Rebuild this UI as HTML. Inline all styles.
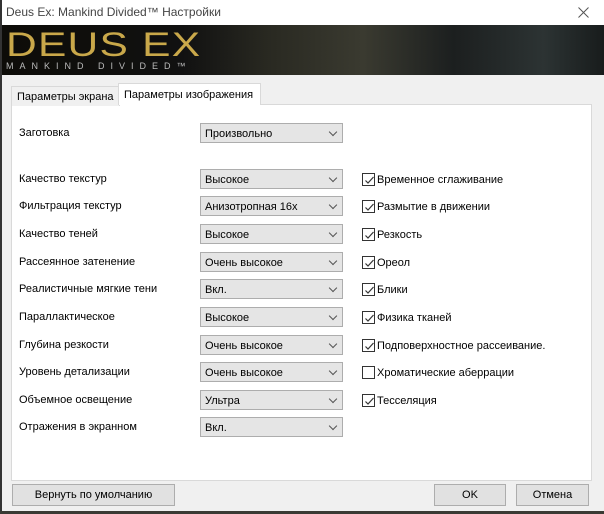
<!DOCTYPE html><html><head><style>
*{box-sizing:border-box;margin:0;padding:0}
body{width:604px;height:514px;background:#f0f0f0;font-family:"Liberation Sans",sans-serif;font-size:11px;color:#000;position:relative;overflow:hidden}
.a{position:absolute}
.title{left:0;top:0;width:604px;height:25px;background:#fff;font-size:12px;line-height:25px;padding-left:6px;color:#444}
.ban{left:2px;top:25px;width:602px;height:50px;background:linear-gradient(90deg,#0d0c08 0,#111 30%,#2a2a22 45%,#3a3a30 60%,#1c1f1f 75%,#2c3333 90%,#181c1c 100%)}
.logo{left:6px;top:26px;font-family:"Liberation Sans",sans-serif;font-size:34px;color:#c9a84a;letter-spacing:1px;transform:scaleX(1.25);transform-origin:left}
.sub{left:6px;top:61px;font-size:9px;color:#bbb;letter-spacing:6px}
.panel{left:11px;top:104px;width:581px;height:377px;background:#fff;border:1px solid #d9d9d9}
.tab{height:20px;border:1px solid #d9d9d9;border-bottom:none;line-height:21px;padding:0 5px;background:#f0f0f0}
.lbl{left:19px;margin-top:1px}
.cb{left:200px;width:143px;height:20px;background:#e5e5e5;border:1px solid #adadad;line-height:20px;padding-left:4px}
.cb:after{content:"";position:absolute;right:6px;top:5px;width:5px;height:5px;border-right:1px solid #555;border-bottom:1px solid #555;transform:rotate(45deg)}
.ck{left:362px;width:13px;height:13px;border:1px solid #333;background:#fff}
.ck svg{position:absolute;left:1px;top:1px}
.cl{left:377px;margin-top:1px}
.btn{height:22px;background:#e1e1e1;border:1px solid #adadad;text-align:center;line-height:21px}
</style></head><body>
<div class="a title">Deus Ex: Mankind Divided™ Настройки</div>
<svg class="a" style="left:578px;top:7px" width="11" height="11"><path d="M0.5 0.5L10.5 10.5M10.5 0.5L0.5 10.5" stroke="#555" stroke-width="1"/></svg>
<div class="a" style="left:0;top:0;width:2px;height:514px;background:#333"></div>
<div class="a ban"></div>
<div class="a logo">DEUS EX</div>
<div class="a sub">MANKIND DIVIDED™</div>
<div class="a panel"></div>
<div class="a tab" style="left:11px;top:86px">Параметры экрана</div>
<div class="a tab" style="left:118px;top:83px;height:22px;background:#fff;width:143px;line-height:22px">Параметры изображения</div>
<div class="a lbl" style="top:126px">Заготовка</div>
<div class="a cb" style="top:123px">Произвольно</div>
<div class="a lbl" style="top:172px">Качество текстур</div><div class="a cb" style="top:169px">Высокое</div>
<div class="a lbl" style="top:199px">Фильтрация текстур</div><div class="a cb" style="top:196px">Анизотропная 16x</div>
<div class="a lbl" style="top:227px">Качество теней</div><div class="a cb" style="top:224px">Высокое</div>
<div class="a lbl" style="top:255px">Рассеянное затенение</div><div class="a cb" style="top:252px">Очень высокое</div>
<div class="a lbl" style="top:282px">Реалистичные мягкие тени</div><div class="a cb" style="top:279px">Вкл.</div>
<div class="a lbl" style="top:310px">Параллактическое</div><div class="a cb" style="top:307px">Высокое</div>
<div class="a lbl" style="top:338px">Глубина резкости</div><div class="a cb" style="top:335px">Очень высокое</div>
<div class="a lbl" style="top:365px">Уровень детализации</div><div class="a cb" style="top:362px">Очень высокое</div>
<div class="a lbl" style="top:393px">Объемное освещение</div><div class="a cb" style="top:390px">Ультра</div>
<div class="a lbl" style="top:420px">Отражения в экранном</div><div class="a cb" style="top:417px">Вкл.</div>
<div class="a ck" style="top:173px"><svg width="11" height="11"><path d="M1.5 5.5L4 8L9.5 2" stroke="#333" fill="none" stroke-width="1.2"/></svg></div><div class="a cl" style="top:173px">Временное сглаживание</div>
<div class="a ck" style="top:200px"><svg width="11" height="11"><path d="M1.5 5.5L4 8L9.5 2" stroke="#333" fill="none" stroke-width="1.2"/></svg></div><div class="a cl" style="top:200px">Размытие в движении</div>
<div class="a ck" style="top:228px"><svg width="11" height="11"><path d="M1.5 5.5L4 8L9.5 2" stroke="#333" fill="none" stroke-width="1.2"/></svg></div><div class="a cl" style="top:228px">Резкость</div>
<div class="a ck" style="top:256px"><svg width="11" height="11"><path d="M1.5 5.5L4 8L9.5 2" stroke="#333" fill="none" stroke-width="1.2"/></svg></div><div class="a cl" style="top:256px">Ореол</div>
<div class="a ck" style="top:283px"><svg width="11" height="11"><path d="M1.5 5.5L4 8L9.5 2" stroke="#333" fill="none" stroke-width="1.2"/></svg></div><div class="a cl" style="top:283px">Блики</div>
<div class="a ck" style="top:311px"><svg width="11" height="11"><path d="M1.5 5.5L4 8L9.5 2" stroke="#333" fill="none" stroke-width="1.2"/></svg></div><div class="a cl" style="top:311px">Физика тканей</div>
<div class="a ck" style="top:339px"><svg width="11" height="11"><path d="M1.5 5.5L4 8L9.5 2" stroke="#333" fill="none" stroke-width="1.2"/></svg></div><div class="a cl" style="top:339px">Подповерхностное рассеивание.</div>
<div class="a ck" style="top:366px"></div><div class="a cl" style="top:366px">Хроматические аберрации</div>
<div class="a ck" style="top:394px"><svg width="11" height="11"><path d="M1.5 5.5L4 8L9.5 2" stroke="#333" fill="none" stroke-width="1.2"/></svg></div><div class="a cl" style="top:394px">Тесселяция</div>
<div class="a btn" style="left:12px;top:484px;width:163px">Вернуть по умолчанию</div>
<div class="a btn" style="left:434px;top:484px;width:72px">OK</div>
<div class="a btn" style="left:516px;top:484px;width:73px">Отмена</div>
<div class="a" style="left:0;top:511px;width:604px;height:3px;background:#3a3a34"></div>
</body></html>
